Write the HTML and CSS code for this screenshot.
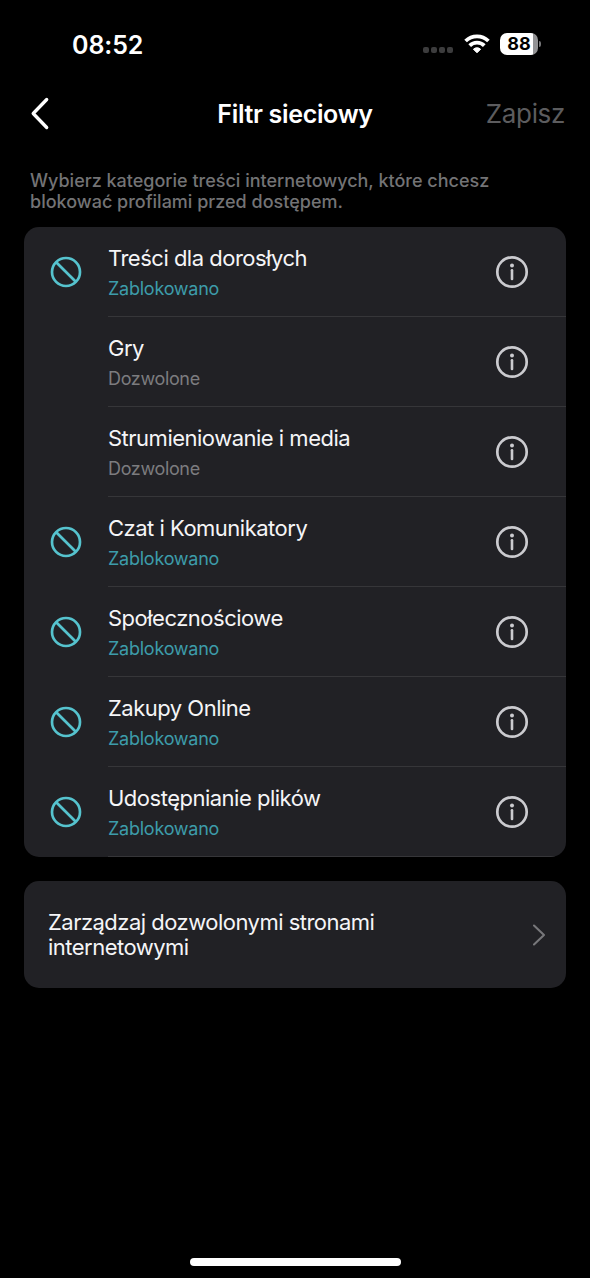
FILE: index.html
```html
<!DOCTYPE html>
<html lang="pl">
<head>
<meta charset="utf-8">
<title>Filtr sieciowy</title>
<link rel="stylesheet" href="styles.css">
</head>
<body>
<svg class="defs" width="0" height="0" aria-hidden="true">
  <symbol id="block" viewBox="0 0 32 32"><circle cx="16" cy="16" r="14" fill="none" stroke="currentColor" stroke-width="2.7"/><path d="M6.2 6.2 25.8 25.8" stroke="currentColor" stroke-width="2.7"/></symbol>
  <symbol id="info" viewBox="0 0 34 34"><circle cx="17" cy="17" r="14.7" fill="none" stroke="currentColor" stroke-width="2.7"/><circle cx="17" cy="10.6" r="2" fill="currentColor"/><path d="M17 15.3v8.6" stroke="currentColor" stroke-width="2.6" stroke-linecap="round"/></symbol>
</svg>
<div class="screen">
  <header class="status">
    <span class="time">08:52</span>
    <div class="indicators">
      <span class="dots"><i></i><i></i><i></i><i></i></span>
      <svg class="wifi" viewBox="0 0 26 20"><g fill="none" stroke="#fff" stroke-width="3.8"><path d="M1.6 7a16.4 16.4 0 0 1 22.8 0"/><path d="M5.7 11.6a10.4 10.4 0 0 1 14.6 0"/></g><path d="M9.4 15.2a5.2 5.2 0 0 1 7.2 0L13 18.8Z" fill="#fff" stroke="#fff" stroke-width="1" stroke-linejoin="round"/></svg>
      <span class="battery"><span class="level">88</span></span><span class="cap"></span>
    </div>
  </header>
  <nav class="nav">
    <svg class="back" viewBox="0 0 20 34"><path d="M16.7 2.5 3.2 16.5l13.5 14" fill="none" stroke="#fff" stroke-width="3.3" stroke-linecap="round" stroke-linejoin="round"/></svg>
    <h1>Filtr sieciowy</h1>
    <span class="save">Zapisz</span>
  </nav>
  <p class="intro">Wybierz kategorie treści internetowych, które chcesz<br>blokować profilami przed dostępem.</p>
  <main>
    <ul class="card list">
      <li><svg class="block"><use href="#block"/></svg><div class="row"><div><h2>Treści dla dorosłych</h2><p class="blocked">Zablokowano</p></div><svg class="info"><use href="#info"/></svg></div></li>
      <li><span class="block"></span><div class="row"><div><h2>Gry</h2><p class="allowed">Dozwolone</p></div><svg class="info"><use href="#info"/></svg></div></li>
      <li><span class="block"></span><div class="row"><div><h2>Strumieniowanie i media</h2><p class="allowed">Dozwolone</p></div><svg class="info"><use href="#info"/></svg></div></li>
      <li><svg class="block"><use href="#block"/></svg><div class="row"><div><h2>Czat i Komunikatory</h2><p class="blocked">Zablokowano</p></div><svg class="info"><use href="#info"/></svg></div></li>
      <li><svg class="block"><use href="#block"/></svg><div class="row"><div><h2>Społecznościowe</h2><p class="blocked">Zablokowano</p></div><svg class="info"><use href="#info"/></svg></div></li>
      <li><svg class="block"><use href="#block"/></svg><div class="row"><div><h2>Zakupy Online</h2><p class="blocked">Zablokowano</p></div><svg class="info"><use href="#info"/></svg></div></li>
      <li><svg class="block"><use href="#block"/></svg><div class="row"><div><h2>Udostępnianie plików</h2><p class="blocked">Zablokowano</p></div><svg class="info"><use href="#info"/></svg></div></li>
    </ul>
    <section class="card manage">
      <p>Zarządzaj dozwolonymi stronami<br>internetowymi</p>
      <svg class="chevron" viewBox="0 0 14 22"><path d="M2 1.5 12 11 2 20.5" fill="none" stroke="#77777a" stroke-width="2.1" stroke-linecap="round" stroke-linejoin="round"/></svg>
    </section>
  </main>
  <div class="home"></div>
</div>
</body>
</html>
```
FILE: styles.css
```css
* { box-sizing: border-box; margin: 0; padding: 0; }
body { background: #000; color: #f5f5f7; font-family: Inter, "Liberation Sans", sans-serif; font-kerning: normal; }
.defs { display: block; }
.screen { display: flex; flex-direction: column; width: 590px; height: 1278px; padding-bottom: 12px; overflow: hidden; }
.status { display: flex; justify-content: space-between; align-items: center; height: 88px; padding: 0 49px 0 72px; }
.time { padding-top: 1px; color: #fff; font-size: 25px; font-weight: 600; letter-spacing: -0.1px; }
.indicators { display: flex; align-items: center; }
.dots { display: flex; gap: 2px; margin: 12px 11px 0 0; }
.dots i { width: 6px; height: 6px; border-radius: 2px; background: #3c3c3d; }
.wifi { width: 26px; height: 20px; margin-right: 10px; }
.battery { display: block; width: 38px; height: 22px; border-radius: 7px; background: linear-gradient(90deg, #fff 33.5px, #929294 33.5px); text-align: center; }
.level { display: block; color: #000; font-size: 18px; font-weight: 650; line-height: 22px; }
.cap { width: 2px; height: 6px; margin-left: 1px; border-radius: 0 3px 3px 0; background: #747476; }
.nav { display: grid; grid-template-columns: 1fr auto 1fr; align-items: center; height: 52px; padding: 0 25px 0 30px; }
.back { width: 20px; height: 34px; }
.nav h1 { margin-right: 5px; color: #fff; font-size: 25px; font-weight: 600; line-height: 30px; letter-spacing: -0.32px; }
.save { justify-self: end; color: #5c5c5e; font-size: 26px; line-height: 30px; letter-spacing: -0.35px; }
.intro { height: 87px; padding: 30px 30px 0; color: #737375; font-size: 18px; font-weight: 500; line-height: 21px; white-space: nowrap; }
main { display: flex; flex-direction: column; gap: 24px; padding: 0 24px; }
.card { border-radius: 15px; background: #212125; overflow: hidden; }
.list { list-style: none; }
.list li { display: flex; align-items: center; height: 90px; padding-left: 26px; }
.block { flex: none; width: 32px; height: 32px; margin-right: 26px; color: #56c3ce; }
.row { display: flex; flex: 1; justify-content: space-between; align-items: center; height: 90px; padding-right: 37px; border-bottom: 1px solid #363639; }
.row > div { padding-top: 6px; }
.row h2 { font-size: 22px; font-weight: 400; line-height: 29px; letter-spacing: -0.5px; white-space: nowrap; }
.row p { font-size: 18px; line-height: 32px; letter-spacing: -0.24px; }
.row .blocked { color: #3d9caa; }
.row .allowed { color: #7c7c7f; letter-spacing: -0.35px; }
.info { width: 34px; height: 34px; color: #cbcbcf; }
.manage { display: flex; justify-content: space-between; align-items: center; height: 107px; padding: 0 20px 0 24px; }
.manage p { font-size: 22px; line-height: 25px; letter-spacing: -0.52px; }
.chevron { width: 14px; height: 22px; }
.home { align-self: center; width: 211px; height: 8px; margin-top: auto; border-radius: 4px; background: #fff; }
```
